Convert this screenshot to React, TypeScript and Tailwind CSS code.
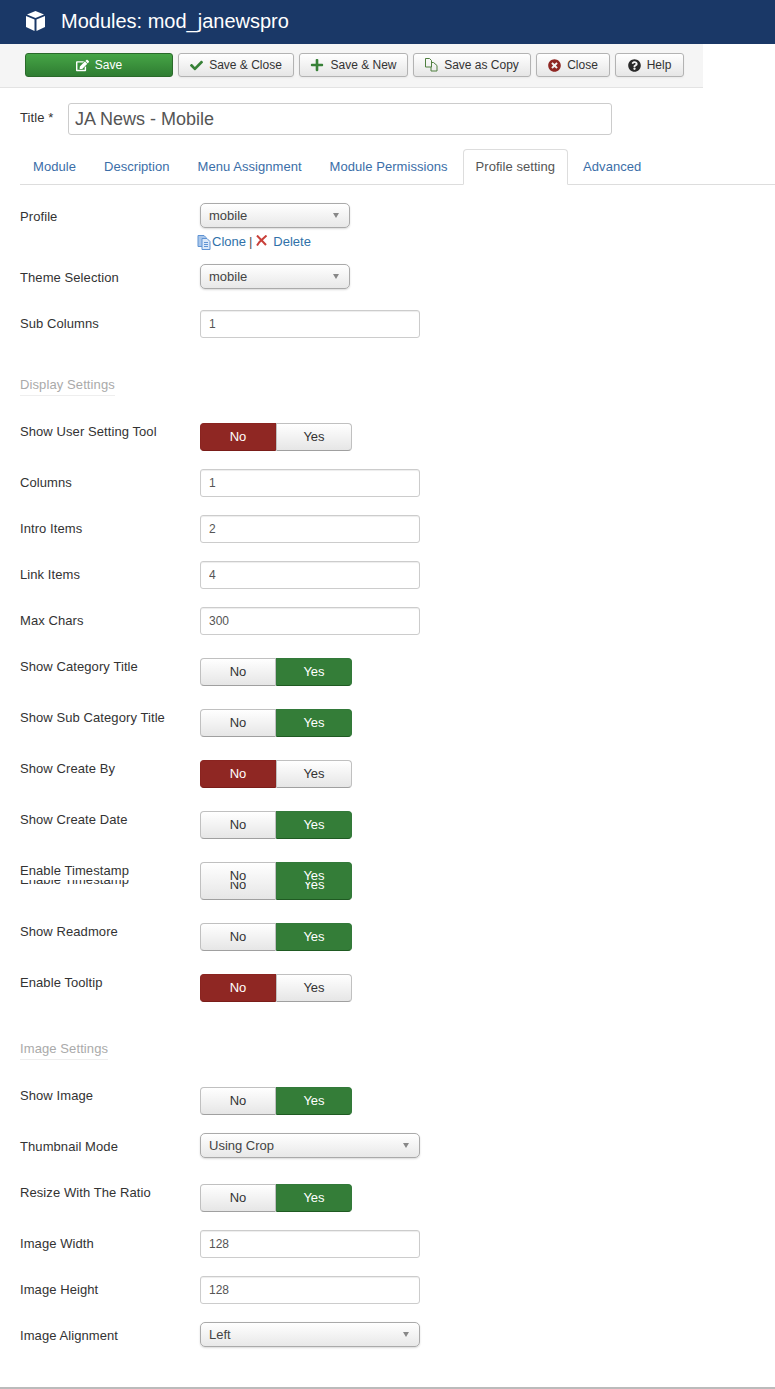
import { ReactNode } from 'react';
import { FaCheck, FaEdit, FaPlus, FaQuestionCircle, FaTimesCircle } from 'react-icons/fa';

const CubeIcon = () => (
  <svg width="19" height="20" viewBox="0 0 19 20" fill="#fff" className="mr-[16px]">
    <path d="M9.500 0 18 3.500 9.500 7 1 3.500z" />
    <path d="M0 5l8.500 3.500V20L0 16z" />
    <path d="M19 5l-8.500 3.500V20L19 16z" />
  </svg>
);

const CopyIcon = () => (
  <svg width="13" height="14" viewBox="0 0 13 14" fill="none" stroke="#4f7f3f" strokeWidth="1">
    <path d="M.5.500h4l2 2v6.500h-6z" />
    <path d="M6.500 4.500h2l3.500 3v5.500h-6v-4" />
  </svg>
);

const CloneIcon = () => (
  <svg width="15" height="15" viewBox="0 0 15 15">
    <path d="M1 .5h6l2 2v9H1z" fill="#a9c6ea" stroke="#5f93d3" />
    <path d="M5 3.500h5l3 3v8H5z" fill="#dbe8f8" stroke="#5f93d3" />
    <path d="M7 7.500h4M7 9.500h4M7 11.500h4" stroke="#5f93d3" />
  </svg>
);

const DeleteIcon = () => (
  <svg width="13" height="11" viewBox="0 0 13 11" className="-mt-[3px]">
    <path d="M2 .5l9 9.500M11.500.5 4.500 7 2 10.500" fill="none" stroke="#c9403a" strokeWidth="2" />
  </svg>
);

type ToolButtonProps = { icon: ReactNode; label: string; width: string };

const ToolButton = ({ icon, label, width }: ToolButtonProps) => (
  <button className={`flex h-6 ${width} items-center justify-center gap-[6px] rounded-[3px] border border-[#b3b3b3] bg-gradient-to-b from-white to-[#e6e6e6] text-xs text-[#333] shadow-[0_1px_2px_rgba(0,0,0,0.05)]`}>
    {icon}
    {label}
  </button>
);

const Label = ({ children }: { children: ReactNode }) => (
  <div className="w-[180px] shrink-0 pt-[5px] text-[13px] leading-[18px] tracking-[0.08px] text-[#333]">{children}</div>
);

const Row = ({ label, children }: { label: string; children: ReactNode }) => (
  <div className="mb-[18px] flex">
    <Label>{label}</Label>
    <div>{children}</div>
  </div>
);

const TextField = ({ label, value }: { label: string; value: string }) => (
  <Row label={label}>
    <input
      readOnly
      value={value}
      className="block h-7 w-[220px] rounded-[3px] border border-[#ccc] bg-white px-2 text-xs text-[#555] shadow-[inset_0_1px_1px_rgba(0,0,0,0.075)]"
    />
  </Row>
);

const SelectBox = ({ value, width }: { value: string; width: string }) => (
  <div className={`flex h-[25px] ${width} items-center justify-between rounded-[5px] border border-[#aaa] bg-gradient-to-b from-white to-[#e8e8e8] pl-2 pr-[10px] text-[13px] text-[#444] shadow-[0_1px_2px_rgba(0,0,0,0.15)]`}>
    <span>{value}</span>
    <span className="h-0 w-0 border-x-[3px] border-t-[5px] border-x-transparent border-t-[#888]" />
  </div>
);

const SelectField = ({ label, value, width }: { label: string; value: string; width: string }) => (
  <Row label={label}>
    <div className="h-7">
      <SelectBox value={value} width={width} />
    </div>
  </Row>
);

const toggleBase = 'flex h-full w-[76px] flex-col items-center justify-center text-[13px]';
const toggleOff = 'border border-[#c0c0c0] border-b-[#a0a0a0] bg-gradient-to-b from-white to-[#e6e6e6] text-[#333]';
const toggleRed = 'border border-[#8a2420] border-b-[#7a1d19] bg-[#8f2723] text-white';
const toggleGreen = 'border border-[#33793a] border-b-[#1f5a22] bg-[#347d38] text-white';

const Toggle = ({ on }: { on: boolean }) => (
  <div className="mt-[5px] flex h-7 w-[152px]">
    <div className={`${toggleBase} rounded-l-[4px] ${on ? toggleOff : toggleRed}`}>No</div>
    <div className={`${toggleBase} rounded-r-[4px] ${on ? toggleGreen : toggleOff}`}>Yes</div>
  </div>
);

const ToggleField = ({ label, on }: { label: string; on: boolean }) => (
  <Row label={label}>
    <Toggle on={on} />
  </Row>
);

const SectionTitle = ({ children }: { children: ReactNode }) => (
  <div className="inline-block border-b border-[#eee] pb-px text-[13px] leading-[18px] tracking-[0.1px] text-[#aaa]">{children}</div>
);

// the doubled row is in the source screenshot: a scroll seam cut through this field
const SeamLabel = () => (
  <div className="w-[180px] shrink-0 pt-[5px] text-[13px] leading-[18px] tracking-[0.08px] text-[#333]">
    <div className="h-[18px]">Enable Timestamp</div>
    <div className="h-[7px] overflow-hidden">
      <div className="-mt-[9px]">Enable Timestamp</div>
    </div>
  </div>
);

const SeamCell = ({ text, className }: { text: string; className: string }) => (
  <div className={`flex h-full w-[76px] flex-col items-center text-[13px] ${className}`}>
    <div className="mt-[6px] h-[13px] leading-[14px]">{text}</div>
    <div className="h-[10px] overflow-hidden leading-[14px]">
      <div className="-mt-[4px]">{text}</div>
    </div>
  </div>
);

const SeamField = () => (
  <div className="mb-[18px] flex">
    <SeamLabel />
    <div className="mt-[5px] flex h-[38px] w-[152px]">
      <SeamCell text="No" className={`rounded-l-[4px] ${toggleOff}`} />
      <SeamCell text="Yes" className={`rounded-r-[4px] ${toggleGreen}`} />
    </div>
  </div>
);

const tabs = ['Module', 'Description', 'Menu Assignment', 'Module Permissions', 'Profile setting', 'Advanced'];

export default function App() {
  return (
    <div className="h-[1389px] overflow-hidden bg-white font-['Liberation_Sans',Arial,sans-serif]">
      <header className="flex h-11 items-center bg-[#1a3867] pb-[2px] pl-[26px] text-white">
        <CubeIcon />
        <h1 className="text-xl font-normal">Modules: mod_janewspro</h1>
      </header>

      <div className="flex h-11 w-[703px] items-start gap-[5px] border-b border-[#e3e3e3] bg-[#f5f5f5] pl-[25px] pt-[9px]">
        <button className="flex h-6 w-[148px] items-center justify-center gap-[6px] rounded-[3px] border border-[#2a6a2a] bg-gradient-to-b from-[#46a546] to-[#2f7d32] text-xs text-white">
          <FaEdit className="text-[13px]" />
          Save
        </button>
        <ToolButton icon={<FaCheck className="text-[13px] text-[#378137]" />} label="Save & Close" width="w-[116px]" />
        <ToolButton icon={<FaPlus className="text-[14px] text-[#378137]" />} label="Save & New" width="w-[109px]" />
        <ToolButton icon={<CopyIcon />} label="Save as Copy" width="w-[118px]" />
        <ToolButton icon={<FaTimesCircle className="text-[13px] text-[#8f2723]" />} label="Close" width="w-[74px]" />
        <ToolButton icon={<FaQuestionCircle className="text-[13px] text-[#2a2a2a]" />} label="Help" width="w-[69px]" />
      </div>

      <div className="flex px-5 pt-[15px]">
        <div className="w-[48px] pt-[6px] text-[13px] leading-[18px] tracking-[0.08px] text-[#333]">Title *</div>
        <input
          readOnly
          value="JA News - Mobile"
          className="h-8 w-[544px] rounded-[3px] border border-[#ccc] px-[6px] text-lg text-[#555]"
        />
      </div>

      <div className="ml-5 mt-[14px] flex h-9 gap-[2px] border-b border-[#ddd]">
        {tabs.map(tab =>
          tab === 'Profile setting' ? (
            <div
              key={tab}
              className="-mb-px flex items-center rounded-t-[4px] border border-b-white border-[#ddd] bg-white px-3 text-[13px] tracking-[0.05px] text-[#555]"
            >
              {tab}
            </div>
          ) : (
            <div key={tab} className="flex items-center px-[13px] text-[13px] tracking-[0.05px] text-[#3b6ea8]">
              {tab}
            </div>
          )
        )}
      </div>

      <div className="px-5 pt-[18px]">
        <div className="mb-[18px] flex">
          <Label>Profile</Label>
          <div className="h-[43px]">
            <SelectBox value="mobile" width="w-[150px]" />
            <div className="-ml-[3px] mt-[5px] flex h-[18px] items-center text-[13px] text-[#3071a9]">
              <CloneIcon />
              <span>Clone</span>
              <span className="mx-[3px] text-[#555]">|</span>
              <DeleteIcon />
              <span className="ml-[5px]">Delete</span>
            </div>
          </div>
        </div>
        <SelectField label="Theme Selection" value="mobile" width="w-[150px]" />
        <TextField label="Sub Columns" value="1" />

        <div className="mb-[22px] mt-[34px]">
          <SectionTitle>Display Settings</SectionTitle>
        </div>

        <ToggleField label="Show User Setting Tool" on={false} />
        <TextField label="Columns" value="1" />
        <TextField label="Intro Items" value="2" />
        <TextField label="Link Items" value="4" />
        <TextField label="Max Chars" value="300" />
        <ToggleField label="Show Category Title" on />
        <ToggleField label="Show Sub Category Title" on />
        <ToggleField label="Show Create By" on={false} />
        <ToggleField label="Show Create Date" on />
        <SeamField />
        <ToggleField label="Show Readmore" on />
        <ToggleField label="Enable Tooltip" on={false} />

        <div className="mb-[22px] mt-[34px]">
          <SectionTitle>Image Settings</SectionTitle>
        </div>

        <ToggleField label="Show Image" on />
        <SelectField label="Thumbnail Mode" value="Using Crop" width="w-[220px]" />
        <ToggleField label="Resize With The Ratio" on />
        <TextField label="Image Width" value="128" />
        <TextField label="Image Height" value="128" />
        <SelectField label="Image Alignment" value="Left" width="w-[220px]" />
      </div>

      <div className="mt-[37px] border-t-2 border-[#bbb]" />
    </div>
  );
}
